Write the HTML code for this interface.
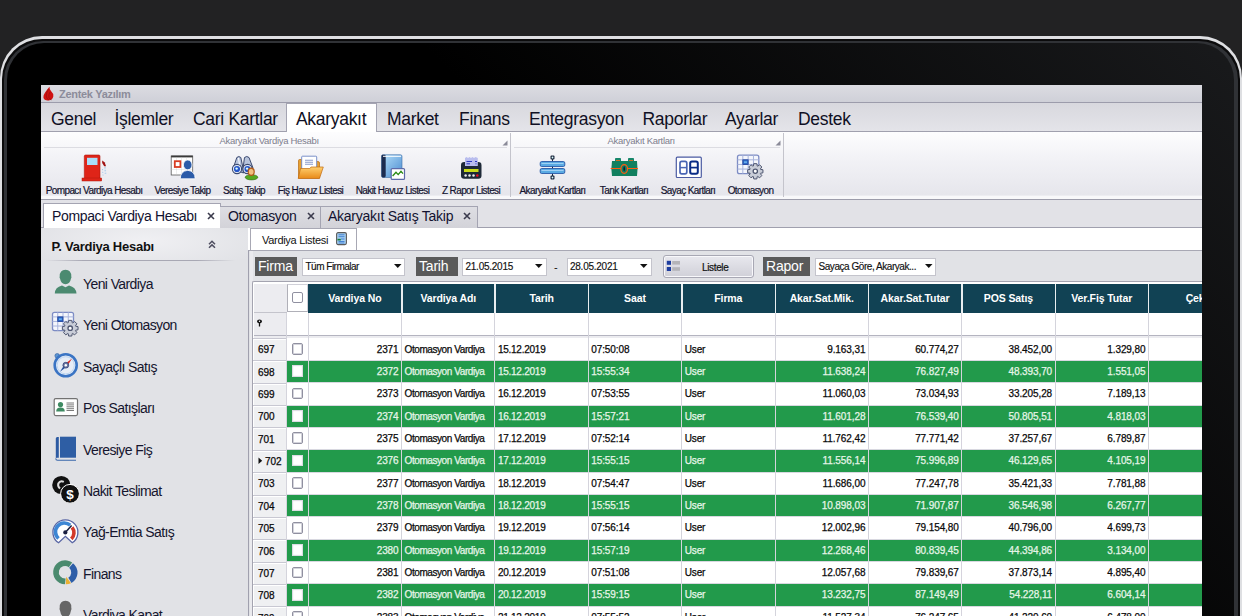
<!DOCTYPE html>
<html><head><meta charset="utf-8"><style>
*{margin:0;padding:0;box-sizing:border-box}
html,body{width:1242px;height:616px;overflow:hidden;background:#222223}
body{position:relative;font-family:"Liberation Sans",sans-serif}
div{position:absolute}
.t{white-space:nowrap;line-height:1}
#scr{left:0;top:0;width:1242px;height:616px;clip-path:inset(85px 40px 0 41px);overflow:hidden}
.menu{font-size:17.5px;color:#101024;letter-spacing:-0.3px}
.rl{font-size:10px;color:#141430;letter-spacing:-0.6px;text-align:center;-webkit-text-stroke:0.2px currentColor}
.gh{font-size:9.5px;color:#7e7e8e;letter-spacing:-0.3px}
.tab{font-size:14px;color:#121230;letter-spacing:-0.36px}
.li{font-size:14px;color:#15152e;letter-spacing:-0.6px}
.hd{font-size:10.5px;font-weight:bold;color:#fff;letter-spacing:-0.1px;text-align:center}
.cell{font-size:10px;letter-spacing:-0.1px;color:#0a0a0a;-webkit-text-stroke:0.25px currentColor}
.nm{letter-spacing:-0.42px}
.dt{letter-spacing:-0.25px}
</style></head><body>
<div style="left:0px;top:36px;width:1242px;height:720px;border-radius:42px;background:#dedfe2"></div><div style="left:2px;top:39px;width:1238px;height:720px;border-radius:40px;background:#0b0b0c"></div><div style="left:3.5px;top:40.5px;width:1234.5px;height:720px;border-radius:39px;background:#303236"></div><div style="left:7px;top:42.5px;width:1227px;height:700px;border-radius:37px;background:linear-gradient(45deg,#000 0px,#000 787px,#191a1c 1363px)"></div>
<div id="scr"><div style="left:41px;top:85px;width:1161px;height:18px;background:linear-gradient(#dcdce2,#cfd0d8);border-bottom:1px solid #9c9cab"></div><div class="t" style="left:59px;top:89px;font-size:11px;font-weight:bold;color:#8c8c9a;letter-spacing:-0.3px">Zentek Yazılım</div><div style="left:41px;top:103px;width:1161px;height:29px;background:linear-gradient(#d8d8de,#e4e4e9);border-bottom:1px solid #a0a0ae"></div><div style="left:285.5px;top:103px;width:91px;height:29px;background:#fff;border:1px solid #a4a4b2;border-bottom:none"></div><div class="t menu" style="left:51px;top:110.5px;">Genel</div><div class="t menu" style="left:114.5px;top:110.5px;">İşlemler</div><div class="t menu" style="left:193px;top:110.5px;">Cari Kartlar</div><div class="t menu" style="left:296px;top:110.5px;">Akaryakıt</div><div class="t menu" style="left:387px;top:110.5px;">Market</div><div class="t menu" style="left:459px;top:110.5px;">Finans</div><div class="t menu" style="left:529px;top:110.5px;">Entegrasyon</div><div class="t menu" style="left:642.5px;top:110.5px;">Raporlar</div><div class="t menu" style="left:725px;top:110.5px;">Ayarlar</div><div class="t menu" style="left:798px;top:110.5px;">Destek</div><div style="left:41px;top:132px;width:1161px;height:68px;background:linear-gradient(#fdfdfe,#f2f2f6 40%,#e6e6ec 94%,#f8f8fa 96%);border-bottom:1px solid #9c9cab"></div><div style="left:510px;top:133px;width:1px;height:64px;background:#c4c4cc"></div><div style="left:783px;top:133px;width:1px;height:64px;background:#c4c4cc"></div><div style="left:44px;top:147px;width:463px;height:1px;background:#dcdce2"></div><div style="left:514px;top:147px;width:266px;height:1px;background:#dcdce2"></div><div class="t gh" style="left:219.5px;top:136.3px;">Akaryakıt Vardiya Hesabı</div><div class="t gh" style="left:607.5px;top:136.3px;">Akaryakıt Kartları</div><div class="t rl" style="left:34px;top:185.5px;width:120px">Pompacı Vardiya Hesabı</div><div class="t rl" style="left:122.5px;top:185.5px;width:120px">Veresiye Takip</div><div class="t rl" style="left:184px;top:185.5px;width:120px">Satış Takip</div><div class="t rl" style="left:250.5px;top:185.5px;width:120px">Fiş Havuz Listesi</div><div class="t rl" style="left:332.5px;top:185.5px;width:120px">Nakit Havuz Listesi</div><div class="t rl" style="left:411px;top:185.5px;width:120px">Z Rapor Listesi</div><div class="t rl" style="left:492.5px;top:185.5px;width:120px">Akaryakıt Kartları</div><div class="t rl" style="left:564px;top:185.5px;width:120px">Tank Kartları</div><div class="t rl" style="left:628px;top:185.5px;width:120px">Sayaç Kartları</div><div class="t rl" style="left:690.5px;top:185.5px;width:120px">Otomasyon</div><div style="left:41px;top:200px;width:1161px;height:28px;background:#e2e2e7;border-bottom:1px solid #a0a0ae"></div><div style="left:43px;top:203px;width:177.5px;height:25px;background:#fff;border:1px solid #a4a4b2;border-bottom:none"></div><div style="left:220px;top:206px;width:100.5px;height:21.5px;background:linear-gradient(#dedee3,#d3d3d9);border:1px solid #a4a4b2;border-bottom:none;border-left:none"></div><div style="left:320px;top:206px;width:157.5px;height:21.5px;background:linear-gradient(#dedee3,#d3d3d9);border:1px solid #a4a4b2;border-bottom:none"></div><div class="t tab" style="left:52px;top:208.7px;">Pompaci Vardiya Hesabı</div><div class="t tab" style="left:228px;top:209.2px;">Otomasyon</div><div class="t tab" style="left:328px;top:209.2px;letter-spacing:-0.25px">Akaryakıt Satış Takip</div><div style="left:41px;top:228px;width:207px;height:400px;background:#e1e2e6"></div><div style="left:41px;top:228px;width:207px;height:32px;background:radial-gradient(ellipse 60% 100% at 50% 40%,#f0f0f3,#e1e2e6)"></div><div style="left:45px;top:260px;width:190px;height:1px;background:linear-gradient(90deg,#e1e2e6,#a8a8b4 20%,#a8a8b4 80%,#e1e2e6)"></div><div class="t" style="left:51.5px;top:239.5px;font-size:13px;font-weight:bold;color:#111;letter-spacing:-0.25px">P. Vardiya Hesabı</div><div class="t li" style="left:83px;top:277.0px;">Yeni Vardiya</div><div class="t li" style="left:83px;top:318.4px;">Yeni Otomasyon</div><div class="t li" style="left:83px;top:359.8px;">Sayaçlı Satış</div><div class="t li" style="left:83px;top:401.2px;">Pos Satışları</div><div class="t li" style="left:83px;top:442.6px;">Veresiye Fiş</div><div class="t li" style="left:83px;top:484.0px;">Nakit Teslimat</div><div class="t li" style="left:83px;top:525.4px;">Yağ-Emtia Satış</div><div class="t li" style="left:83px;top:566.8px;">Finans</div><div class="t li" style="left:83px;top:608.2px;">Vardiya Kapat</div><div style="left:247.7px;top:228px;width:955px;height:22px;background:#fff"></div><div style="left:248px;top:249.7px;width:955px;height:400px;background:#e1e2e6;border-left:1.4px solid #a0a0ae;border-top:1.3px solid #a8a8b4"></div><div style="left:249.6px;top:251px;width:3px;height:400px;background:#eaeaee"></div><div style="left:250.3px;top:228.3px;width:107.2px;height:21.6px;background:#fff;border:1.2px solid #a8a8b4;border-bottom:none"></div><div class="t" style="left:262px;top:234.5px;font-size:11px;color:#111;letter-spacing:-0.3px">Vardiya Listesi</div><div style="left:255px;top:256.5px;width:42px;height:19.5px;background:#5a5a5a"></div><div class="t" style="left:258px;top:259px;font-size:14px;color:#fff;letter-spacing:-0.2px">Firma</div><div style="left:302px;top:257.5px;width:103px;height:18px;background:#fff;border:1px solid #c4c4cc"></div><div class="t" style="left:305.5px;top:262px;font-size:10px;color:#111;letter-spacing:-0.5px;-webkit-text-stroke:0.15px #111">Tüm Firmalar</div><svg style="position:absolute;left:393.75px;top:263.8px;overflow:visible" width="7.5" height="4" viewBox="0 0 7.5 4"><path d="M0 0 H7.5 L3.75 4 Z" fill="#111"/></svg><div style="left:416px;top:256.5px;width:42px;height:19.5px;background:#5a5a5a"></div><div class="t" style="left:419px;top:259px;font-size:14px;color:#fff;letter-spacing:-0.2px">Tarih</div><div style="left:462px;top:257.5px;width:85px;height:18px;background:#fff;border:1px solid #c4c4cc"></div><div class="t" style="left:465.5px;top:262px;font-size:10px;color:#111;letter-spacing:-0.25px;-webkit-text-stroke:0.15px #111">21.05.2015</div><svg style="position:absolute;left:535.25px;top:263.8px;overflow:visible" width="7.5" height="4" viewBox="0 0 7.5 4"><path d="M0 0 H7.5 L3.75 4 Z" fill="#111"/></svg><div class="t" style="left:554px;top:262px;font-size:11px;color:#111">-</div><div style="left:566.5px;top:257.5px;width:85px;height:18px;background:#fff;border:1px solid #c4c4cc"></div><div class="t" style="left:570.0px;top:262px;font-size:10px;color:#111;letter-spacing:-0.25px;-webkit-text-stroke:0.15px #111">28.05.2021</div><svg style="position:absolute;left:639.75px;top:263.8px;overflow:visible" width="7.5" height="4" viewBox="0 0 7.5 4"><path d="M0 0 H7.5 L3.75 4 Z" fill="#111"/></svg><div style="left:662.5px;top:255px;width:91.5px;height:22.8px;background:linear-gradient(#e8e8ee,#d0d0d8);border:1px solid #a8a8b4;border-radius:3px;box-shadow:inset 0 0 0 1px #f8f8fb"></div><div class="t" style="left:702px;top:262.8px;font-size:10px;color:#111;letter-spacing:-0.35px;-webkit-text-stroke:0.2px #111">Listele</div><div style="left:763px;top:256.5px;width:47px;height:19.5px;background:#5a5a5a"></div><div class="t" style="left:766px;top:259px;font-size:14px;color:#fff;letter-spacing:-0.2px">Rapor</div><div style="left:815px;top:257.5px;width:121px;height:18px;background:#fff;border:1px solid #c4c4cc"></div><div class="t" style="left:818.5px;top:262px;font-size:10px;color:#111;letter-spacing:-0.45px;-webkit-text-stroke:0.15px #111">Sayaça Göre, Akaryak...</div><svg style="position:absolute;left:925.25px;top:263.8px;overflow:visible" width="7.5" height="4" viewBox="0 0 7.5 4"><path d="M0 0 H7.5 L3.75 4 Z" fill="#111"/></svg><div style="left:252px;top:281px;width:952px;height:400px;background:#fff;border-left:1.5px solid #a4a4b0;border-top:1.5px solid #a4a4b0;border-top-left-radius:2px"></div><div style="left:253.5px;top:283.5px;width:33px;height:29.0px;background:#ececf0"></div><div style="left:253.5px;top:312.0px;width:33px;height:1px;background:#c4c4cc"></div><div style="left:287px;top:283.5px;width:21px;height:28.5px;background:#fff;border:1px solid #b0b0b8;border-top-color:#d0d0d8;border-right-color:#d0d0d8"></div><div style="left:292px;top:291.8px;width:11.2px;height:11.2px;background:#fff;border:1.6px solid #9090a0;border-radius:2px"></div><div style="left:308.2px;top:283.5px;width:893.8px;height:29.0px;background:#114254"></div><div class="t hd" style="left:308.2px;top:293.0px;width:93.36px">Vardiya No</div><div style="left:401.06px;top:283.5px;width:1.5px;height:29.0px;background:#e8eef0"></div><div class="t hd" style="left:401.56px;top:293.0px;width:93.36px">Vardiya Adı</div><div style="left:494.41999999999996px;top:283.5px;width:1.5px;height:29.0px;background:#e8eef0"></div><div class="t hd" style="left:494.91999999999996px;top:293.0px;width:93.36px">Tarih</div><div style="left:587.78px;top:283.5px;width:1.5px;height:29.0px;background:#e8eef0"></div><div class="t hd" style="left:588.28px;top:293.0px;width:93.36px">Saat</div><div style="left:681.14px;top:283.5px;width:1.5px;height:29.0px;background:#e8eef0"></div><div class="t hd" style="left:681.64px;top:293.0px;width:93.36px">Firma</div><div style="left:774.5px;top:283.5px;width:1.5px;height:29.0px;background:#e8eef0"></div><div class="t hd" style="left:775.0px;top:293.0px;width:93.36px">Akar.Sat.Mik.</div><div style="left:867.8599999999999px;top:283.5px;width:1.5px;height:29.0px;background:#e8eef0"></div><div class="t hd" style="left:868.3599999999999px;top:293.0px;width:93.36px">Akar.Sat.Tutar</div><div style="left:961.22px;top:283.5px;width:1.5px;height:29.0px;background:#e8eef0"></div><div class="t hd" style="left:961.72px;top:293.0px;width:93.36px">POS Satış</div><div style="left:1054.58px;top:283.5px;width:1.5px;height:29.0px;background:#e8eef0"></div><div class="t hd" style="left:1055.08px;top:293.0px;width:93.36px">Ver.Fiş Tutar</div><div style="left:1147.94px;top:283.5px;width:1.5px;height:29.0px;background:#e8eef0"></div><div class="t hd" style="left:1148.44px;top:293.0px;width:93.36px">Çek</div><div style="left:253.5px;top:312.5px;width:33px;height:22.5px;background:#ececf0"></div><div style="left:253.5px;top:335px;width:949px;height:3px;background:#ececf0;border-top:1.2px solid #b4b4c0"></div><div style="left:252.5px;top:338.0px;width:34px;height:22.36px;background:#eff0f2;border-top:1px solid #c8c8d2;box-shadow:inset 1px 1px 0 #fff"></div><div style="left:286.5px;top:338.0px;width:916px;height:22.36px;background:#fff"></div><div class="t cell" style="left:258px;top:345.3px;color:#0a0a0a">697</div><div style="left:292.2px;top:343.0px;width:11.2px;height:11.7px;background:#fff;border:1.6px solid #9090a0;border-radius:2px;box-shadow:inset 0 0 0 1px #d4d4dc"></div><div class="t cell" style="left:308.2px;top:344.5px;width:90.36px;text-align:right;color:#0a0a0a">2371</div><div class="t cell nm" style="left:404.56px;top:344.5px;color:#0a0a0a">Otomasyon Vardiya</div><div class="t cell dt" style="left:497.91999999999996px;top:344.5px;color:#0a0a0a">15.12.2019</div><div class="t cell" style="left:591.28px;top:344.5px;color:#0a0a0a">07:50:08</div><div class="t cell" style="left:684.64px;top:344.5px;color:#0a0a0a">User</div><div class="t cell" style="left:775.0px;top:344.5px;width:90.36px;text-align:right;color:#0a0a0a">9.163,31</div><div class="t cell" style="left:868.3599999999999px;top:344.5px;width:90.36px;text-align:right;color:#0a0a0a">60.774,27</div><div class="t cell" style="left:961.72px;top:344.5px;width:90.36px;text-align:right;color:#0a0a0a">38.452,00</div><div class="t cell" style="left:1055.08px;top:344.5px;width:90.36px;text-align:right;color:#0a0a0a">1.329,80</div><div style="left:252.5px;top:360.36px;width:34px;height:22.36px;background:#eff0f2;border-top:1px solid #c8c8d2;box-shadow:inset 1px 1px 0 #fff"></div><div style="left:286.5px;top:360.36px;width:916px;height:22.36px;background:#229a4b"></div><div class="t cell" style="left:258px;top:367.66px;color:#0a0a0a">698</div><div style="left:292.2px;top:365.36px;width:11.2px;height:11.7px;background:#fff;border:1.5px solid #dcdce4;box-shadow:inset 0 0 1px #c8c8d0"></div><div class="t cell" style="left:308.2px;top:366.86px;width:90.36px;text-align:right;color:#e6f5e8">2372</div><div class="t cell nm" style="left:404.56px;top:366.86px;color:#e6f5e8">Otomasyon Vardiya</div><div class="t cell dt" style="left:497.91999999999996px;top:366.86px;color:#e6f5e8">15.12.2019</div><div class="t cell" style="left:591.28px;top:366.86px;color:#e6f5e8">15:55:34</div><div class="t cell" style="left:684.64px;top:366.86px;color:#e6f5e8">User</div><div class="t cell" style="left:775.0px;top:366.86px;width:90.36px;text-align:right;color:#e6f5e8">11.638,24</div><div class="t cell" style="left:868.3599999999999px;top:366.86px;width:90.36px;text-align:right;color:#e6f5e8">76.827,49</div><div class="t cell" style="left:961.72px;top:366.86px;width:90.36px;text-align:right;color:#e6f5e8">48.393,70</div><div class="t cell" style="left:1055.08px;top:366.86px;width:90.36px;text-align:right;color:#e6f5e8">1.551,05</div><div style="left:252.5px;top:382.72px;width:34px;height:22.36px;background:#eff0f2;border-top:1px solid #c8c8d2;box-shadow:inset 1px 1px 0 #fff"></div><div style="left:286.5px;top:382.72px;width:916px;height:22.36px;background:#fff"></div><div class="t cell" style="left:258px;top:390.02000000000004px;color:#0a0a0a">699</div><div style="left:292.2px;top:387.72px;width:11.2px;height:11.7px;background:#fff;border:1.6px solid #9090a0;border-radius:2px;box-shadow:inset 0 0 0 1px #d4d4dc"></div><div class="t cell" style="left:308.2px;top:389.22px;width:90.36px;text-align:right;color:#0a0a0a">2373</div><div class="t cell nm" style="left:404.56px;top:389.22px;color:#0a0a0a">Otomasyon Vardiya</div><div class="t cell dt" style="left:497.91999999999996px;top:389.22px;color:#0a0a0a">16.12.2019</div><div class="t cell" style="left:591.28px;top:389.22px;color:#0a0a0a">07:53:55</div><div class="t cell" style="left:684.64px;top:389.22px;color:#0a0a0a">User</div><div class="t cell" style="left:775.0px;top:389.22px;width:90.36px;text-align:right;color:#0a0a0a">11.060,03</div><div class="t cell" style="left:868.3599999999999px;top:389.22px;width:90.36px;text-align:right;color:#0a0a0a">73.034,93</div><div class="t cell" style="left:961.72px;top:389.22px;width:90.36px;text-align:right;color:#0a0a0a">33.205,28</div><div class="t cell" style="left:1055.08px;top:389.22px;width:90.36px;text-align:right;color:#0a0a0a">7.189,13</div><div style="left:252.5px;top:405.08px;width:34px;height:22.36px;background:#eff0f2;border-top:1px solid #c8c8d2;box-shadow:inset 1px 1px 0 #fff"></div><div style="left:286.5px;top:405.08px;width:916px;height:22.36px;background:#229a4b"></div><div class="t cell" style="left:258px;top:412.38px;color:#0a0a0a">700</div><div style="left:292.2px;top:410.08px;width:11.2px;height:11.7px;background:#fff;border:1.5px solid #dcdce4;box-shadow:inset 0 0 1px #c8c8d0"></div><div class="t cell" style="left:308.2px;top:411.58px;width:90.36px;text-align:right;color:#e6f5e8">2374</div><div class="t cell nm" style="left:404.56px;top:411.58px;color:#e6f5e8">Otomasyon Vardiya</div><div class="t cell dt" style="left:497.91999999999996px;top:411.58px;color:#e6f5e8">16.12.2019</div><div class="t cell" style="left:591.28px;top:411.58px;color:#e6f5e8">15:57:21</div><div class="t cell" style="left:684.64px;top:411.58px;color:#e6f5e8">User</div><div class="t cell" style="left:775.0px;top:411.58px;width:90.36px;text-align:right;color:#e6f5e8">11.601,28</div><div class="t cell" style="left:868.3599999999999px;top:411.58px;width:90.36px;text-align:right;color:#e6f5e8">76.539,40</div><div class="t cell" style="left:961.72px;top:411.58px;width:90.36px;text-align:right;color:#e6f5e8">50.805,51</div><div class="t cell" style="left:1055.08px;top:411.58px;width:90.36px;text-align:right;color:#e6f5e8">4.818,03</div><div style="left:252.5px;top:427.44px;width:34px;height:22.36px;background:#eff0f2;border-top:1px solid #c8c8d2;box-shadow:inset 1px 1px 0 #fff"></div><div style="left:286.5px;top:427.44px;width:916px;height:22.36px;background:#fff"></div><div class="t cell" style="left:258px;top:434.74px;color:#0a0a0a">701</div><div style="left:292.2px;top:432.44px;width:11.2px;height:11.7px;background:#fff;border:1.6px solid #9090a0;border-radius:2px;box-shadow:inset 0 0 0 1px #d4d4dc"></div><div class="t cell" style="left:308.2px;top:433.94px;width:90.36px;text-align:right;color:#0a0a0a">2375</div><div class="t cell nm" style="left:404.56px;top:433.94px;color:#0a0a0a">Otomasyon Vardiya</div><div class="t cell dt" style="left:497.91999999999996px;top:433.94px;color:#0a0a0a">17.12.2019</div><div class="t cell" style="left:591.28px;top:433.94px;color:#0a0a0a">07:52:14</div><div class="t cell" style="left:684.64px;top:433.94px;color:#0a0a0a">User</div><div class="t cell" style="left:775.0px;top:433.94px;width:90.36px;text-align:right;color:#0a0a0a">11.762,42</div><div class="t cell" style="left:868.3599999999999px;top:433.94px;width:90.36px;text-align:right;color:#0a0a0a">77.771,42</div><div class="t cell" style="left:961.72px;top:433.94px;width:90.36px;text-align:right;color:#0a0a0a">37.257,67</div><div class="t cell" style="left:1055.08px;top:433.94px;width:90.36px;text-align:right;color:#0a0a0a">6.789,87</div><div style="left:252.5px;top:449.8px;width:34px;height:22.36px;background:#eff0f2;border-top:1px solid #c8c8d2;box-shadow:inset 1px 1px 0 #fff"></div><div style="left:286.5px;top:449.8px;width:916px;height:22.36px;background:#229a4b"></div><div class="t cell" style="left:265px;top:457.1px;color:#0a0a0a">702</div><div style="left:292.2px;top:454.8px;width:11.2px;height:11.7px;background:#fff;border:1.5px solid #dcdce4;box-shadow:inset 0 0 1px #c8c8d0"></div><div class="t cell" style="left:308.2px;top:456.3px;width:90.36px;text-align:right;color:#e6f5e8">2376</div><div class="t cell nm" style="left:404.56px;top:456.3px;color:#e6f5e8">Otomasyon Vardiya</div><div class="t cell dt" style="left:497.91999999999996px;top:456.3px;color:#e6f5e8">17.12.2019</div><div class="t cell" style="left:591.28px;top:456.3px;color:#e6f5e8">15:55:15</div><div class="t cell" style="left:684.64px;top:456.3px;color:#e6f5e8">User</div><div class="t cell" style="left:775.0px;top:456.3px;width:90.36px;text-align:right;color:#e6f5e8">11.556,14</div><div class="t cell" style="left:868.3599999999999px;top:456.3px;width:90.36px;text-align:right;color:#e6f5e8">75.996,89</div><div class="t cell" style="left:961.72px;top:456.3px;width:90.36px;text-align:right;color:#e6f5e8">46.129,65</div><div class="t cell" style="left:1055.08px;top:456.3px;width:90.36px;text-align:right;color:#e6f5e8">4.105,19</div><div style="left:252.5px;top:472.15999999999997px;width:34px;height:22.36px;background:#eff0f2;border-top:1px solid #c8c8d2;box-shadow:inset 1px 1px 0 #fff"></div><div style="left:286.5px;top:472.15999999999997px;width:916px;height:22.36px;background:#fff"></div><div class="t cell" style="left:258px;top:479.46px;color:#0a0a0a">703</div><div style="left:292.2px;top:477.15999999999997px;width:11.2px;height:11.7px;background:#fff;border:1.6px solid #9090a0;border-radius:2px;box-shadow:inset 0 0 0 1px #d4d4dc"></div><div class="t cell" style="left:308.2px;top:478.65999999999997px;width:90.36px;text-align:right;color:#0a0a0a">2377</div><div class="t cell nm" style="left:404.56px;top:478.65999999999997px;color:#0a0a0a">Otomasyon Vardiya</div><div class="t cell dt" style="left:497.91999999999996px;top:478.65999999999997px;color:#0a0a0a">18.12.2019</div><div class="t cell" style="left:591.28px;top:478.65999999999997px;color:#0a0a0a">07:54:47</div><div class="t cell" style="left:684.64px;top:478.65999999999997px;color:#0a0a0a">User</div><div class="t cell" style="left:775.0px;top:478.65999999999997px;width:90.36px;text-align:right;color:#0a0a0a">11.686,00</div><div class="t cell" style="left:868.3599999999999px;top:478.65999999999997px;width:90.36px;text-align:right;color:#0a0a0a">77.247,78</div><div class="t cell" style="left:961.72px;top:478.65999999999997px;width:90.36px;text-align:right;color:#0a0a0a">35.421,33</div><div class="t cell" style="left:1055.08px;top:478.65999999999997px;width:90.36px;text-align:right;color:#0a0a0a">7.781,88</div><div style="left:252.5px;top:494.52px;width:34px;height:22.36px;background:#eff0f2;border-top:1px solid #c8c8d2;box-shadow:inset 1px 1px 0 #fff"></div><div style="left:286.5px;top:494.52px;width:916px;height:22.36px;background:#229a4b"></div><div class="t cell" style="left:258px;top:501.82px;color:#0a0a0a">704</div><div style="left:292.2px;top:499.52px;width:11.2px;height:11.7px;background:#fff;border:1.5px solid #dcdce4;box-shadow:inset 0 0 1px #c8c8d0"></div><div class="t cell" style="left:308.2px;top:501.02px;width:90.36px;text-align:right;color:#e6f5e8">2378</div><div class="t cell nm" style="left:404.56px;top:501.02px;color:#e6f5e8">Otomasyon Vardiya</div><div class="t cell dt" style="left:497.91999999999996px;top:501.02px;color:#e6f5e8">18.12.2019</div><div class="t cell" style="left:591.28px;top:501.02px;color:#e6f5e8">15:55:15</div><div class="t cell" style="left:684.64px;top:501.02px;color:#e6f5e8">User</div><div class="t cell" style="left:775.0px;top:501.02px;width:90.36px;text-align:right;color:#e6f5e8">10.898,03</div><div class="t cell" style="left:868.3599999999999px;top:501.02px;width:90.36px;text-align:right;color:#e6f5e8">71.907,87</div><div class="t cell" style="left:961.72px;top:501.02px;width:90.36px;text-align:right;color:#e6f5e8">36.546,98</div><div class="t cell" style="left:1055.08px;top:501.02px;width:90.36px;text-align:right;color:#e6f5e8">6.267,77</div><div style="left:252.5px;top:516.88px;width:34px;height:22.36px;background:#eff0f2;border-top:1px solid #c8c8d2;box-shadow:inset 1px 1px 0 #fff"></div><div style="left:286.5px;top:516.88px;width:916px;height:22.36px;background:#fff"></div><div class="t cell" style="left:258px;top:524.18px;color:#0a0a0a">705</div><div style="left:292.2px;top:521.88px;width:11.2px;height:11.7px;background:#fff;border:1.6px solid #9090a0;border-radius:2px;box-shadow:inset 0 0 0 1px #d4d4dc"></div><div class="t cell" style="left:308.2px;top:523.38px;width:90.36px;text-align:right;color:#0a0a0a">2379</div><div class="t cell nm" style="left:404.56px;top:523.38px;color:#0a0a0a">Otomasyon Vardiya</div><div class="t cell dt" style="left:497.91999999999996px;top:523.38px;color:#0a0a0a">19.12.2019</div><div class="t cell" style="left:591.28px;top:523.38px;color:#0a0a0a">07:56:14</div><div class="t cell" style="left:684.64px;top:523.38px;color:#0a0a0a">User</div><div class="t cell" style="left:775.0px;top:523.38px;width:90.36px;text-align:right;color:#0a0a0a">12.002,96</div><div class="t cell" style="left:868.3599999999999px;top:523.38px;width:90.36px;text-align:right;color:#0a0a0a">79.154,80</div><div class="t cell" style="left:961.72px;top:523.38px;width:90.36px;text-align:right;color:#0a0a0a">40.796,00</div><div class="t cell" style="left:1055.08px;top:523.38px;width:90.36px;text-align:right;color:#0a0a0a">4.699,73</div><div style="left:252.5px;top:539.24px;width:34px;height:22.36px;background:#eff0f2;border-top:1px solid #c8c8d2;box-shadow:inset 1px 1px 0 #fff"></div><div style="left:286.5px;top:539.24px;width:916px;height:22.36px;background:#229a4b"></div><div class="t cell" style="left:258px;top:546.54px;color:#0a0a0a">706</div><div style="left:292.2px;top:544.24px;width:11.2px;height:11.7px;background:#fff;border:1.5px solid #dcdce4;box-shadow:inset 0 0 1px #c8c8d0"></div><div class="t cell" style="left:308.2px;top:545.74px;width:90.36px;text-align:right;color:#e6f5e8">2380</div><div class="t cell nm" style="left:404.56px;top:545.74px;color:#e6f5e8">Otomasyon Vardiya</div><div class="t cell dt" style="left:497.91999999999996px;top:545.74px;color:#e6f5e8">19.12.2019</div><div class="t cell" style="left:591.28px;top:545.74px;color:#e6f5e8">15:57:19</div><div class="t cell" style="left:684.64px;top:545.74px;color:#e6f5e8">User</div><div class="t cell" style="left:775.0px;top:545.74px;width:90.36px;text-align:right;color:#e6f5e8">12.268,46</div><div class="t cell" style="left:868.3599999999999px;top:545.74px;width:90.36px;text-align:right;color:#e6f5e8">80.839,45</div><div class="t cell" style="left:961.72px;top:545.74px;width:90.36px;text-align:right;color:#e6f5e8">44.394,86</div><div class="t cell" style="left:1055.08px;top:545.74px;width:90.36px;text-align:right;color:#e6f5e8">3.134,00</div><div style="left:252.5px;top:561.6px;width:34px;height:22.36px;background:#eff0f2;border-top:1px solid #c8c8d2;box-shadow:inset 1px 1px 0 #fff"></div><div style="left:286.5px;top:561.6px;width:916px;height:22.36px;background:#fff"></div><div class="t cell" style="left:258px;top:568.9px;color:#0a0a0a">707</div><div style="left:292.2px;top:566.6px;width:11.2px;height:11.7px;background:#fff;border:1.6px solid #9090a0;border-radius:2px;box-shadow:inset 0 0 0 1px #d4d4dc"></div><div class="t cell" style="left:308.2px;top:568.1px;width:90.36px;text-align:right;color:#0a0a0a">2381</div><div class="t cell nm" style="left:404.56px;top:568.1px;color:#0a0a0a">Otomasyon Vardiya</div><div class="t cell dt" style="left:497.91999999999996px;top:568.1px;color:#0a0a0a">20.12.2019</div><div class="t cell" style="left:591.28px;top:568.1px;color:#0a0a0a">07:51:08</div><div class="t cell" style="left:684.64px;top:568.1px;color:#0a0a0a">User</div><div class="t cell" style="left:775.0px;top:568.1px;width:90.36px;text-align:right;color:#0a0a0a">12.057,68</div><div class="t cell" style="left:868.3599999999999px;top:568.1px;width:90.36px;text-align:right;color:#0a0a0a">79.839,67</div><div class="t cell" style="left:961.72px;top:568.1px;width:90.36px;text-align:right;color:#0a0a0a">37.873,14</div><div class="t cell" style="left:1055.08px;top:568.1px;width:90.36px;text-align:right;color:#0a0a0a">4.895,40</div><div style="left:252.5px;top:583.96px;width:34px;height:22.36px;background:#eff0f2;border-top:1px solid #c8c8d2;box-shadow:inset 1px 1px 0 #fff"></div><div style="left:286.5px;top:583.96px;width:916px;height:22.36px;background:#229a4b"></div><div class="t cell" style="left:258px;top:591.26px;color:#0a0a0a">708</div><div style="left:292.2px;top:588.96px;width:11.2px;height:11.7px;background:#fff;border:1.5px solid #dcdce4;box-shadow:inset 0 0 1px #c8c8d0"></div><div class="t cell" style="left:308.2px;top:590.46px;width:90.36px;text-align:right;color:#e6f5e8">2382</div><div class="t cell nm" style="left:404.56px;top:590.46px;color:#e6f5e8">Otomasyon Vardiya</div><div class="t cell dt" style="left:497.91999999999996px;top:590.46px;color:#e6f5e8">20.12.2019</div><div class="t cell" style="left:591.28px;top:590.46px;color:#e6f5e8">15:59:15</div><div class="t cell" style="left:684.64px;top:590.46px;color:#e6f5e8">User</div><div class="t cell" style="left:775.0px;top:590.46px;width:90.36px;text-align:right;color:#e6f5e8">13.232,75</div><div class="t cell" style="left:868.3599999999999px;top:590.46px;width:90.36px;text-align:right;color:#e6f5e8">87.149,49</div><div class="t cell" style="left:961.72px;top:590.46px;width:90.36px;text-align:right;color:#e6f5e8">54.228,11</div><div class="t cell" style="left:1055.08px;top:590.46px;width:90.36px;text-align:right;color:#e6f5e8">6.604,14</div><div style="left:252.5px;top:606.3199999999999px;width:34px;height:22.36px;background:#eff0f2;border-top:1px solid #c8c8d2;box-shadow:inset 1px 1px 0 #fff"></div><div style="left:286.5px;top:606.3199999999999px;width:916px;height:22.36px;background:#fff"></div><div class="t cell" style="left:258px;top:613.6199999999999px;color:#0a0a0a">709</div><div style="left:292.2px;top:611.3199999999999px;width:11.2px;height:11.7px;background:#fff;border:1.6px solid #9090a0;border-radius:2px;box-shadow:inset 0 0 0 1px #d4d4dc"></div><div class="t cell" style="left:308.2px;top:612.8199999999999px;width:90.36px;text-align:right;color:#0a0a0a">2383</div><div class="t cell nm" style="left:404.56px;top:612.8199999999999px;color:#0a0a0a">Otomasyon Vardiya</div><div class="t cell dt" style="left:497.91999999999996px;top:612.8199999999999px;color:#0a0a0a">21.12.2019</div><div class="t cell" style="left:591.28px;top:612.8199999999999px;color:#0a0a0a">07:55:52</div><div class="t cell" style="left:684.64px;top:612.8199999999999px;color:#0a0a0a">User</div><div class="t cell" style="left:775.0px;top:612.8199999999999px;width:90.36px;text-align:right;color:#0a0a0a">11.527,34</div><div class="t cell" style="left:868.3599999999999px;top:612.8199999999999px;width:90.36px;text-align:right;color:#0a0a0a">76.247,65</div><div class="t cell" style="left:961.72px;top:612.8199999999999px;width:90.36px;text-align:right;color:#0a0a0a">41.220,60</div><div class="t cell" style="left:1055.08px;top:612.8199999999999px;width:90.36px;text-align:right;color:#0a0a0a">6.478,00</div><div style="left:286.0px;top:312.5px;width:1px;height:400px;background:#d4d4dc"></div><div style="left:307.7px;top:312.5px;width:1px;height:400px;background:#d4d4dc"></div><div style="left:401.06px;top:312.5px;width:1px;height:400px;background:#d4d4dc"></div><div style="left:494.41999999999996px;top:312.5px;width:1px;height:400px;background:#d4d4dc"></div><div style="left:587.78px;top:312.5px;width:1px;height:400px;background:#d4d4dc"></div><div style="left:681.14px;top:312.5px;width:1px;height:400px;background:#d4d4dc"></div><div style="left:774.5px;top:312.5px;width:1px;height:400px;background:#d4d4dc"></div><div style="left:867.8599999999999px;top:312.5px;width:1px;height:400px;background:#d4d4dc"></div><div style="left:961.22px;top:312.5px;width:1px;height:400px;background:#d4d4dc"></div><div style="left:1054.58px;top:312.5px;width:1px;height:400px;background:#d4d4dc"></div><div style="left:1147.94px;top:312.5px;width:1px;height:400px;background:#d4d4dc"></div><div style="left:286.5px;top:359.86px;width:916px;height:1px;background:#d8d8e0"></div><div style="left:286.5px;top:382.22px;width:916px;height:1px;background:#d8d8e0"></div><div style="left:286.5px;top:404.58px;width:916px;height:1px;background:#d8d8e0"></div><div style="left:286.5px;top:426.94px;width:916px;height:1px;background:#d8d8e0"></div><div style="left:286.5px;top:449.3px;width:916px;height:1px;background:#d8d8e0"></div><div style="left:286.5px;top:471.65999999999997px;width:916px;height:1px;background:#d8d8e0"></div><div style="left:286.5px;top:494.02px;width:916px;height:1px;background:#d8d8e0"></div><div style="left:286.5px;top:516.38px;width:916px;height:1px;background:#d8d8e0"></div><div style="left:286.5px;top:538.74px;width:916px;height:1px;background:#d8d8e0"></div><div style="left:286.5px;top:561.1px;width:916px;height:1px;background:#d8d8e0"></div><div style="left:286.5px;top:583.46px;width:916px;height:1px;background:#d8d8e0"></div><div style="left:286.5px;top:605.8199999999999px;width:916px;height:1px;background:#d8d8e0"></div><div style="left:286.5px;top:628.1800000000001px;width:916px;height:1px;background:#d8d8e0"></div><svg style="position:absolute;left:41px;top:85px;overflow:visible" width="16" height="17" viewBox="0 0 16 17"><path d="M8.5 1.8 Q4 7 2.6 10.5 Q1.5 14.8 6.3 15.6 Q11.5 15.8 12.3 11.5 Q12.8 8.5 10 6 Q8.2 4 8.5 1.8 Z" fill="#d01212"/><path d="M7.5 4 Q5 8 5.2 11 Q5.6 14 8 15.2 M9 7 Q7.3 10 8 12.5 Q8.6 14.3 10.5 14.8" fill="none" stroke="#8a1010" stroke-width="0.6"/></svg><svg style="position:absolute;left:502px;top:140px;overflow:visible" width="6" height="6" viewBox="0 0 6 6"><path d="M5.5 0.5 V5.5 H0.5 Z" fill="#8a8a98"/></svg><svg style="position:absolute;left:775px;top:140px;overflow:visible" width="6" height="6" viewBox="0 0 6 6"><path d="M5.5 0.5 V5.5 H0.5 Z" fill="#8a8a98"/></svg><svg style="position:absolute;left:207.1px;top:211.5px;overflow:visible" width="8" height="8" viewBox="0 0 8 8"><path d="M1 1 L7 7 M7 1 L1 7" stroke="#3a3a4c" stroke-width="1.6"/></svg><svg style="position:absolute;left:307.4px;top:211.5px;overflow:visible" width="8" height="8" viewBox="0 0 8 8"><path d="M1 1 L7 7 M7 1 L1 7" stroke="#3a3a4c" stroke-width="1.6"/></svg><svg style="position:absolute;left:463.3px;top:211.5px;overflow:visible" width="8" height="8" viewBox="0 0 8 8"><path d="M1 1 L7 7 M7 1 L1 7" stroke="#3a3a4c" stroke-width="1.6"/></svg><svg style="position:absolute;left:208px;top:239.5px;overflow:visible" width="8" height="9" viewBox="0 0 8 9"><path d="M1 4.2 L4 1.3 L7 4.2 M1 7.8 L4 4.9 L7 7.8" fill="none" stroke="#4e4e60" stroke-width="1.5"/></svg><svg style="position:absolute;left:336px;top:232px;overflow:visible" width="11" height="13" viewBox="0 0 11 13"><rect x="0.6" y="0.6" width="9.8" height="12" rx="1.5" fill="#a8d0f0" stroke="#5a5a5a" stroke-width="1.1"/><path d="M2.5 2.8 H8.5 M2.5 4.7 H8.5 M5 7 H8.5 M2.5 9.5 H8.5 M2.5 11 H8.5" stroke="#3a7ad0" stroke-width="0.9"/><path d="M1.5 6.8 H4.8 V8.5 H1.5 Z" fill="#1a7a3a"/></svg><svg style="position:absolute;left:666px;top:260px;overflow:visible" width="16" height="12" viewBox="0 0 16 12"><rect x="0.8" y="0.8" width="4.2" height="4" fill="#1e3ea0"/><rect x="0.8" y="7" width="4.2" height="4" fill="#1e3ea0"/><rect x="6.2" y="1" width="7.8" height="3.6" fill="#b4b4b8"/><rect x="6.2" y="7.2" width="7.8" height="3.6" fill="#b4b4b8"/></svg><svg style="position:absolute;left:256px;top:319px;overflow:visible" width="8" height="9" viewBox="0 0 8 9"><path d="M1 2.5 Q1 0.5 3.5 0.5 Q6 0.5 6 2.5 Q6 4 3.5 4.5 Q1 4 1 2.5 Z" fill="#111"/><circle cx="3.5" cy="2.2" r="0.7" fill="#fff"/><path d="M3.5 4 V7.5" stroke="#111" stroke-width="1.3"/></svg><svg style="position:absolute;left:257.5px;top:457px;overflow:visible" width="5" height="8" viewBox="0 0 5 8"><path d="M0.5 0.5 L4.2 3.7 L0.5 7 Z" fill="#111"/></svg><svg width="0" height="0" style="position:absolute"><defs><linearGradient id="gfold" x1="0" y1="0" x2="0" y2="1"><stop offset="0" stop-color="#ffd070"/><stop offset="1" stop-color="#e88a18"/></linearGradient><linearGradient id="gbook" x1="0" y1="0" x2="1" y2="1"><stop offset="0" stop-color="#b4e0fa"/><stop offset="1" stop-color="#4a8ad0"/></linearGradient></defs></svg><svg style="position:absolute;left:76px;top:150px;overflow:visible" width="40" height="34" viewBox="0 0 40 34"><rect x="8.3" y="5" width="15.7" height="23.5" rx="1.2" fill="#df2418" stroke="#b0180f" stroke-width="0.6"/><rect x="11" y="7.8" width="10.5" height="7.2" fill="#a9def9"/><rect x="6" y="28" width="19.7" height="3" fill="#df2418" stroke="#b0180f" stroke-width="0.5"/><path d="M26.2 10.5 L28.8 12.5 L30 16.2 L28.2 16.2 L26.2 13 Z" fill="#a01212"/><path d="M29 17 L29.5 24" stroke="#b8d4ee" stroke-width="1.6" stroke-dasharray="1.6 1.2"/><path d="M26.5 19 L27 25.5" stroke="#9ec4ea" stroke-width="0.9" stroke-dasharray="1.2 1.6"/></svg><svg style="position:absolute;left:164px;top:150px;overflow:visible" width="40" height="34" viewBox="0 0 40 34"><rect x="7.2" y="6" width="21.5" height="19" fill="#fff" stroke="#5a5a5a" stroke-width="0.8"/><rect x="7.2" y="5.6" width="21.5" height="1.8" fill="#3a3a3a"/><path d="M7.5 13 H28 M7.5 19.5 H28 M12.5 7.5 V25 M17.5 7.5 V25 M22.5 7.5 V25" stroke="#c8c8c8" stroke-width="0.6" stroke-dasharray="1 1"/><rect x="10.8" y="11.2" width="5.6" height="5.8" fill="#fff" stroke="#d83c22" stroke-width="1.8"/><path d="M16.3 28.8 Q16.3 21.2 23.7 20.3 Q31.2 21.2 31.2 28.8 Z" fill="#2b5ba8" stroke="#fff" stroke-width="0.8"/><ellipse cx="23.7" cy="14.9" rx="4.3" ry="4.9" fill="#2b5ba8" stroke="#fff" stroke-width="0.8"/></svg><svg style="position:absolute;left:226px;top:150px;overflow:visible" width="40" height="34" viewBox="0 0 40 34"><path d="M7 19 L10.8 7.5 Q12.8 5.5 14.8 7.5 L16.8 17 L17.5 23 Z" fill="#b8c4dc" stroke="#3c4a70" stroke-width="1"/><path d="M17.2 17 L18.5 7.5 Q20.8 5.5 23 7.5 L27 18 L17.5 22 Z" fill="#b8c4dc" stroke="#3c4a70" stroke-width="1"/><path d="M12.5 8 L14 18" stroke="#fff" stroke-width="1"/><circle cx="11" cy="19" r="4.6" fill="#e8eef8" stroke="#3c4a70" stroke-width="1.1"/><circle cx="11" cy="19" r="3.1" fill="#2656c8"/><circle cx="10.6" cy="18.6" r="1.2" fill="#dff"/><circle cx="21.5" cy="19" r="4.6" fill="#e8eef8" stroke="#3c4a70" stroke-width="1.1"/><circle cx="21.5" cy="19" r="3.1" fill="#2656c8"/><circle cx="21.1" cy="18.6" r="1.2" fill="#dff"/><ellipse cx="25.5" cy="27.3" rx="6.3" ry="2.6" fill="#56a820" stroke="#2e6a10" stroke-width="0.6"/><ellipse cx="25.2" cy="21.8" rx="3" ry="3.6" fill="#f0c080" stroke="#b05a18" stroke-width="1.2"/><path d="M22.3 20.5 Q25 16.8 28 20.5 L27 19 Q25 18.5 23.5 19.5 Z" fill="#b05a18"/></svg><svg style="position:absolute;left:291px;top:150px;overflow:visible" width="40" height="34" viewBox="0 0 40 34"><path d="M7.5 10.5 Q7.5 9.5 8.8 9.5 L10.5 9.5 L10.5 10.5 L27 11.5 Q28.5 11.5 28.5 13 L28.5 28 L7.5 28 Z" fill="#e8a030" stroke="#b86a10" stroke-width="0.7"/><rect x="10.7" y="6.2" width="15" height="13.5" rx="0.8" fill="#fff" stroke="#6d86c4" stroke-width="0.9"/><path d="M14 10.3 H22 M14 12.3 H22 M14 14.3 H22" stroke="#8a9ccc" stroke-width="1.1"/><path d="M9.5 18.5 L18.8 18.5 L20 17 L32.3 17 L28.5 28.5 L7.2 28.5 Z" fill="url(#gfold)" stroke="#c06a10" stroke-width="0.7"/></svg><svg style="position:absolute;left:373px;top:150px;overflow:visible" width="40" height="34" viewBox="0 0 40 34"><rect x="8.5" y="4.7" width="20.5" height="22.8" rx="1.6" fill="url(#gbook)" stroke="#3e6ea8" stroke-width="0.6"/><rect x="8.5" y="4.7" width="4.2" height="22.8" rx="1.4" fill="#1c2c50"/><path d="M10 6.3 H28" stroke="#fff" stroke-width="1"/><rect x="18.2" y="18.6" width="13.3" height="10.8" rx="1" fill="#fff" stroke="#5d6aa8" stroke-width="1.2"/><path d="M19.6 26 L23 22.2 L25.2 24.6 L28 21.3 L30 23.6" fill="none" stroke="#2a8a12" stroke-width="1.3"/></svg><svg style="position:absolute;left:451px;top:150px;overflow:visible" width="40" height="34" viewBox="0 0 40 34"><rect x="10" y="12" width="20.5" height="16.8" rx="3.2" fill="#1e2a38"/><path d="M14 16 L14 8 L15.5 7 L17 8 L18.5 7 L20 8 L21.5 7 L23 8 L24.5 7 L26.8 8 L26.8 16 Z" fill="#b9bdee"/><path d="M15.5 11.5 H21 M24 11.5 H26 M15.5 13.8 H19 M24.5 13.8 H25.5" stroke="#2a38c0" stroke-width="1"/><rect x="13" y="19" width="14.5" height="3" fill="#c9dc1a"/><circle cx="14.6" cy="25.5" r="1.25" fill="#eee"/><circle cx="18.5" cy="25.5" r="1.25" fill="#eee"/><circle cx="22.5" cy="25.5" r="1.25" fill="#eee"/><circle cx="26.3" cy="25.5" r="1.25" fill="#f01020"/></svg><svg style="position:absolute;left:532px;top:150px;overflow:visible" width="40" height="34" viewBox="0 0 40 34"><path d="M20.5 8 V27" stroke="#1e2a40" stroke-width="1"/><rect x="18.5" y="5.5" width="4" height="4" rx="1" fill="#1e2a40"/><circle cx="20.5" cy="7.5" r="0.9" fill="#dff"/><rect x="18.5" y="25.5" width="4" height="4" rx="1" fill="#1e2a40"/><circle cx="20.5" cy="27.5" r="0.9" fill="#dff"/><rect x="8.2" y="11.5" width="24.6" height="5" rx="1.5" fill="#5aaae2" stroke="#2a5aa8" stroke-width="0.9"/><rect x="8.2" y="18.5" width="24.6" height="5" rx="1.5" fill="#5aaae2" stroke="#2a5aa8" stroke-width="0.9"/><path d="M9.5 13.5 H31.5 M9.5 20.5 H31.5" stroke="#a8d6f6" stroke-width="0.9"/></svg><svg style="position:absolute;left:604px;top:150px;overflow:visible" width="40" height="34" viewBox="0 0 40 34"><rect x="11" y="8" width="6" height="3.5" rx="0.8" fill="#17876a"/><rect x="24" y="8" width="6" height="3.5" rx="0.8" fill="#17876a"/><path d="M12 10.5 H16 M25 10.5 H29" stroke="#ff6a10" stroke-width="0.8"/><path d="M8 11 H33 Q34 18.5 33 26 H8 Q6.8 18.5 8 11 Z" fill="#12805f"/><path d="M6.6 18.5 H34" stroke="#ff5a10" stroke-width="1"/><ellipse cx="20.2" cy="19" rx="3.3" ry="4.3" fill="#12805f" stroke="#ff5a10" stroke-width="1.2"/><path d="M20.2 15.8 Q22 19.5 20.2 21.6 Q18.4 19.5 20.2 15.8 Z" fill="#0e1a38"/></svg><svg style="position:absolute;left:668px;top:150px;overflow:visible" width="40" height="34" viewBox="0 0 40 34"><rect x="8.3" y="7.2" width="25" height="20.3" rx="1" fill="#fff" stroke="#4b5ba2" stroke-width="1.2"/><rect x="12" y="11.4" width="6.8" height="12.4" rx="1.8" fill="none" stroke="#4a66b4" stroke-width="1.7"/><path d="M12 17.6 H18.8" stroke="#4a66b4" stroke-width="1.5"/><rect x="22.2" y="11.4" width="7.6" height="12.4" rx="1.8" fill="none" stroke="#0a2c86" stroke-width="2"/><path d="M22.2 17.6 H29.8" stroke="#0a2c86" stroke-width="1.7"/></svg><svg style="position:absolute;left:730px;top:150px;overflow:visible" width="40" height="34" viewBox="0 0 40 34"><rect x="7.5" y="5.2" width="21.3" height="18.5" rx="2" fill="#f4f6fc" stroke="#7d8cc4" stroke-width="1.3"/><line x1="12.82" y1="5.2" x2="12.82" y2="23.7" stroke="#a8b4dc" stroke-width="1"/><line x1="7.5" y1="9.82" x2="28.8" y2="9.82" stroke="#a8b4dc" stroke-width="1"/><line x1="18.15" y1="5.2" x2="18.15" y2="23.7" stroke="#a8b4dc" stroke-width="1"/><line x1="7.5" y1="14.45" x2="28.8" y2="14.45" stroke="#a8b4dc" stroke-width="1"/><line x1="23.48" y1="5.2" x2="23.48" y2="23.7" stroke="#a8b4dc" stroke-width="1"/><line x1="7.5" y1="19.07" x2="28.8" y2="19.07" stroke="#a8b4dc" stroke-width="1"/><rect x="12.82" y="9.82" width="5.33" height="4.62" fill="#2f6cc8" stroke="#1d3f9a" stroke-width="0.8"/><rect x="14.02" y="11.32" width="2.93" height="1.62" fill="#6ab0f0"/><polygon points="30.55,19.36 32.95,19.77 32.95,22.83 30.55,23.24 30.39,23.64 31.79,25.62 29.62,27.79 27.64,26.39 27.24,26.55 26.83,28.95 23.77,28.95 23.36,26.55 22.96,26.39 20.98,27.79 18.81,25.62 20.21,23.64 20.05,23.24 17.65,22.83 17.65,19.77 20.05,19.36 20.21,18.96 18.81,16.98 20.98,14.81 22.96,16.21 23.36,16.05 23.77,13.65 26.83,13.65 27.24,16.05 27.64,16.21 29.62,14.81 31.79,16.98 30.39,18.96" fill="#c9cdd8" stroke="#4e5670" stroke-width="1"/><circle cx="25.3" cy="21.3" r="2.13" fill="#fff" stroke="#4e5670" stroke-width="1.3"/></svg><svg style="position:absolute;left:46px;top:266px;overflow:visible" width="40" height="34" viewBox="0 0 40 34"><path d="M8.8 27.6 Q9 21.3 16 19.6 L19.5 21.2 L23 19.6 Q30 21.3 30.5 27.6 Z" fill="#4b8a70"/><path d="M19.5 3.8 Q25.3 3.8 25.3 10.5 Q25.8 11.3 25 12.5 Q24 18 19.5 18.3 Q15 18 14 12.5 Q13.2 11.3 13.7 10.5 Q13.7 3.8 19.5 3.8 Z" fill="#4b8a70"/></svg><svg style="position:absolute;left:46px;top:308px;overflow:visible" width="40" height="34" viewBox="0 0 40 34"><rect x="6.5" y="4.3" width="21" height="18.3" rx="2" fill="#f4f6fc" stroke="#7d8cc4" stroke-width="1.3"/><line x1="11.75" y1="4.3" x2="11.75" y2="22.6" stroke="#a8b4dc" stroke-width="1"/><line x1="6.5" y1="8.88" x2="27.5" y2="8.88" stroke="#a8b4dc" stroke-width="1"/><line x1="17.00" y1="4.3" x2="17.00" y2="22.6" stroke="#a8b4dc" stroke-width="1"/><line x1="6.5" y1="13.45" x2="27.5" y2="13.45" stroke="#a8b4dc" stroke-width="1"/><line x1="22.25" y1="4.3" x2="22.25" y2="22.6" stroke="#a8b4dc" stroke-width="1"/><line x1="6.5" y1="18.03" x2="27.5" y2="18.03" stroke="#a8b4dc" stroke-width="1"/><rect x="11.75" y="8.88" width="5.25" height="4.58" fill="#2f6cc8" stroke="#1d3f9a" stroke-width="0.8"/><rect x="12.95" y="10.38" width="2.85" height="1.58" fill="#6ab0f0"/><polygon points="29.64,18.19 32.04,18.63 32.04,21.77 29.64,22.21 29.47,22.63 30.86,24.63 28.63,26.86 26.63,25.47 26.21,25.64 25.77,28.04 22.63,28.04 22.19,25.64 21.77,25.47 19.77,26.86 17.54,24.63 18.93,22.63 18.76,22.21 16.36,21.77 16.36,18.63 18.76,18.19 18.93,17.77 17.54,15.77 19.77,13.54 21.77,14.93 22.19,14.76 22.63,12.36 25.77,12.36 26.21,14.76 26.63,14.93 28.63,13.54 30.86,15.77 29.47,17.77" fill="#c9cdd8" stroke="#4e5670" stroke-width="1"/><circle cx="24.2" cy="20.2" r="2.20" fill="#fff" stroke="#4e5670" stroke-width="1.3"/></svg><svg style="position:absolute;left:46px;top:349px;overflow:visible" width="40" height="34" viewBox="0 0 40 34"><circle cx="11.2" cy="6.8" r="2.3" fill="#5e96d0" stroke="#2d5aa0" stroke-width="0.6"/><circle cx="19.7" cy="16.3" r="11" fill="#e6ecf6" stroke="#3a74c4" stroke-width="2.6"/><circle cx="19.7" cy="16.3" r="8.6" fill="none" stroke="#bcd6f2" stroke-width="1"/><path d="M19 15 L26 9.6 L21 17.5 Z" fill="#e0281c"/><path d="M21 17.5 L14 22.8 L18.6 15.2 Z" fill="#2550a0"/><circle cx="19.8" cy="16.2" r="2.9" fill="#6a78a4" stroke="#3a4678" stroke-width="0.8"/><circle cx="19.8" cy="16.2" r="1.2" fill="#fff"/></svg><svg style="position:absolute;left:46px;top:390px;overflow:visible" width="40" height="34" viewBox="0 0 40 34"><rect x="8.2" y="8.6" width="23.3" height="17" rx="1.5" fill="#fff" stroke="#727272" stroke-width="1.2"/><circle cx="14.5" cy="14.6" r="2.6" fill="#3e8a62"/><path d="M10.2 21.4 Q10.2 17.8 14.5 17.6 Q18.8 17.8 18.8 21.4 Z" fill="#3e8a62"/><path d="M20.5 13 H28 M20.5 14.9 H28 M20.5 16.8 H28 M20.5 18.7 H28 M20.5 20.5 H28" stroke="#7a7a7a" stroke-width="1"/></svg><svg style="position:absolute;left:46px;top:432px;overflow:visible" width="40" height="34" viewBox="0 0 40 34"><path d="M12.8 5 L12.8 25.8 L11 25.8 Q9.8 25.8 9.8 27 L9.8 6.5 Q9.8 5 11.3 5 Z" fill="#2c5aa2"/><rect x="14" y="4.7" width="16" height="21" fill="#2e5ea4"/><path d="M9.8 26.5 Q9.8 28.3 11.5 28.3 L30 28.3" fill="none" stroke="#3a68ac" stroke-width="1.1"/></svg><svg style="position:absolute;left:46px;top:473px;overflow:visible" width="40" height="34" viewBox="0 0 40 34"><circle cx="15.3" cy="12" r="9.1" fill="#111"/><path d="M17.8 8.8 Q14.2 7 12.3 10.5 Q11.5 13.5 14 15.5" fill="none" stroke="#ddd" stroke-width="2"/><circle cx="24" cy="20.8" r="9.4" fill="#111" stroke="#fff" stroke-width="1"/><text x="24" y="25.6" text-anchor="middle" font-family="Liberation Sans" font-weight="bold" font-size="13.5" fill="#fff">$</text></svg><svg style="position:absolute;left:46px;top:515px;overflow:visible" width="40" height="34" viewBox="0 0 40 34"><path d="M12.6 27.8 A12.5 12.5 0 1 1 26.2 27.8 L19.4 21.3 Z" fill="#fff" stroke="#5865a4" stroke-width="1.3"/><path d="M12.5 23.5 A8.7 8.7 0 0 1 24.2 10.2" fill="none" stroke="#3d86d4" stroke-width="3.6"/><path d="M26.1 12.3 A8.7 8.7 0 0 1 25.3 23.9" fill="none" stroke="#d2392a" stroke-width="3.6"/><path d="M19.3 17.4 L25.6 10.6" stroke="#1a2040" stroke-width="1.5"/><circle cx="19.3" cy="17.4" r="2.1" fill="#1a2040"/></svg><svg style="position:absolute;left:46px;top:556px;overflow:visible" width="40" height="34" viewBox="0 0 40 34"><path d="M19 28.3 A12 12 0 1 1 26.2 6.6 L22.8 11.2 A6.3 6.3 0 1 0 19.6 22.6 Z" fill="#4a8a6e"/><path d="M27 7.2 A12 12 0 0 1 25.5 27 L22.3 21.8 A6.3 6.3 0 0 0 23.2 11.8 Z" fill="#2d5ea8"/><path d="M25 27.3 A12 12 0 0 1 19.8 28.3 L20.2 20.8 Z" fill="#eab032"/></svg><svg style="position:absolute;left:46px;top:590px;overflow:visible" width="40" height="26" viewBox="0 0 40 26"><path d="M19.5 10.8 Q25.5 10.8 25.3 18 Q25.8 19 25 20.5 Q24 27 19.5 27.5 Q15 27 14 20.5 Q13.2 19 13.7 18 Q13.5 10.8 19.5 10.8 Z" fill="#666"/></svg></div>
</body></html>
